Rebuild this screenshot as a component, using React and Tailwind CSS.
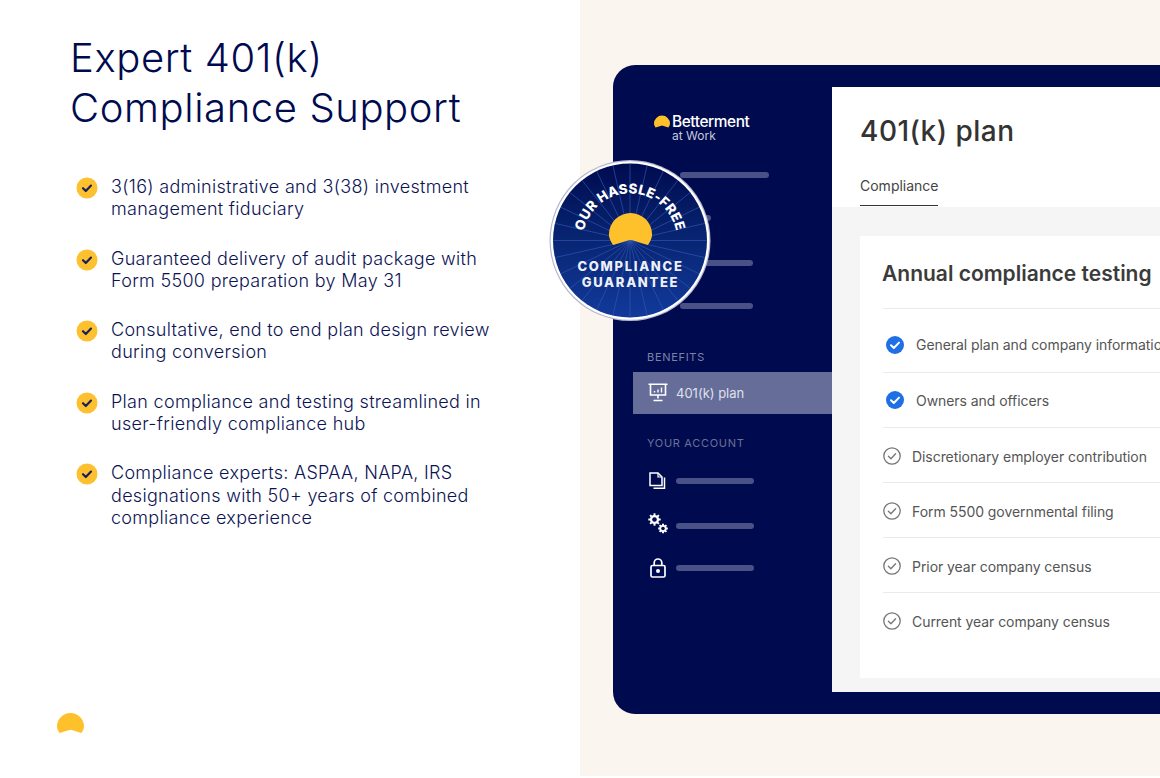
import React from 'react';

const bullets = [
  ['3(16) administrative and 3(38) investment', 'management fiduciary'],
  ['Guaranteed delivery of audit package with', 'Form 5500 preparation by May 31'],
  ['Consultative, end to end plan design review', 'during conversion'],
  ['Plan compliance and testing streamlined in', 'user-friendly compliance hub'],
  ['Compliance experts: ASPAA, NAPA, IRS', 'designations with 50+ years of combined', 'compliance experience'],
];

const checks = [
  { label: 'General plan and company information', done: true },
  { label: 'Owners and officers', done: true },
  { label: 'Discretionary employer contribution' },
  { label: 'Form 5500 governmental filing' },
  { label: 'Prior year company census' },
  { label: 'Current year company census' },
];

const SUN = 'M2.6 20 C1 17.5 0 15.6 0 13.4 A13.5 13.4 0 0 1 27 13.4 C27 15.6 26 17.5 24.4 20 L14.6 17 Q13.5 16.6 12.4 17 Z';

const Sun = ({ className }) => (
  <svg viewBox="0 0 27 20" className={className}>
    <path d={SUN} fill="#fec02b" />
  </svg>
);

const BulletIcon = () => (
  <svg viewBox="0 0 22 22" className="w-[22px] h-[22px] shrink-0">
    <circle cx="11" cy="11" r="10.5" fill="#fdc02f" />
    <path d="M7 11.2l2.8 2.8 5.2-5.4" fill="none" stroke="#1b2158" strokeWidth="2.2" strokeLinecap="round" strokeLinejoin="round" />
  </svg>
);

const BlueCheck = () => (
  <svg viewBox="0 0 18 18" className="w-[18px] h-[18px] shrink-0">
    <circle cx="9" cy="9" r="9" fill="#1f6fe5" />
    <path d="M5 9.3l2.8 2.7 5.2-5.4" fill="none" stroke="#fff" strokeWidth="2" strokeLinecap="round" strokeLinejoin="round" />
  </svg>
);

const GrayCheck = () => (
  <svg viewBox="0 0 18 18" className="w-[18px] h-[18px] shrink-0">
    <circle cx="9" cy="9" r="8.2" fill="none" stroke="#757575" strokeWidth="1.3" />
    <path d="M5.4 9.3l2.5 2.4 4.7-4.9" fill="none" stroke="#757575" strokeWidth="1.3" strokeLinecap="round" strokeLinejoin="round" />
  </svg>
);

const PlanIcon = () => (
  <svg viewBox="0 0 20 20" className="w-5 h-5 shrink-0" fill="none" stroke="#fff" strokeWidth="1.6">
    <path d="M0.5 1.2h19M2.5 1.2v10.8h15V1.2M10 12v3.5M5.5 17.5h9" />
    <path d="M6.5 9.5V8M10 9.5V6.5M13.5 9.5V4.5" strokeWidth="1.4" />
  </svg>
);

const CopyIcon = () => (
  <svg viewBox="0 0 18 18" className="w-[18px] h-[18px] shrink-0" fill="none" stroke="#fff" strokeWidth="1.5">
    <path d="M1 1h8l4 4v8.5H1z" />
    <path d="M9 1v4h4" strokeWidth="1.2" />
    <path d="M15.5 5.5v10.8H4.5" />
  </svg>
);

const gear = (x, y, r, outer) => {
  const teeth = [0, 45, 90, 135].map((a) => {
    const rad = (a * Math.PI) / 180;
    const dx = Math.cos(rad) * outer;
    const dy = Math.sin(rad) * outer;
    return <line key={a} x1={x - dx} y1={y - dy} x2={x + dx} y2={y + dy} strokeWidth="2" />;
  });
  return (
    <g>
      {teeth}
      <circle cx={x} cy={y} r={r} fill="#fff" stroke="none" />
      <circle cx={x} cy={y} r={r * 0.5} fill="#000a4e" stroke="none" />
    </g>
  );
};

const GearsIcon = () => (
  <svg viewBox="0 0 20 21" className="w-5 h-[21px] shrink-0 -translate-y-[3px]" fill="none" stroke="#fff">
    {gear(6.5, 6.5, 4.6, 6.2)}
    {gear(15, 15.5, 3.6, 4.8)}
  </svg>
);

const LockIcon = () => (
  <svg viewBox="0 0 16 20" className="w-4 h-5 shrink-0" fill="none" stroke="#fff" strokeWidth="1.7">
    <rect x="1" y="7.5" width="14" height="11.5" rx="1.5" />
    <path d="M4.2 7.5V4.8a3.8 3.8 0 0 1 7.6 0v2.7" />
    <circle cx="8" cy="13" r="2" fill="#fff" stroke="none" />
  </svg>
);

const Bar = ({ className }) => <div className={`h-[6px] rounded-full bg-[#4a5186] ${className}`} />;

const Badge = () => {
  // rays fan out from the notch of the sun
  const rays = [];
  for (let i = 0; i < 28; i++) {
    const rad = ((i * 360) / 28) * (Math.PI / 180);
    rays.push(
      <line key={i} x1="80" y1="80" x2={80 + Math.cos(rad) * 90} y2={80 + Math.sin(rad) * 90} stroke="#2f56b4" strokeOpacity="0.75" strokeWidth="0.9" />
    );
  }
  return (
    <svg viewBox="0 0 164 164" className="w-[164px] h-[164px]">
      <defs>
        <linearGradient id="badgeFill" x1="0" y1="0" x2="0" y2="1">
          <stop offset="0" stopColor="#000b4f" />
          <stop offset="0.45" stopColor="#07236f" />
          <stop offset="1" stopColor="#123a9b" />
        </linearGradient>
        <clipPath id="badgeClip">
          <circle cx="80" cy="80" r="77" />
        </clipPath>
        <path id="badgeArc" d="M33.7 88 A47 47 0 1 1 126.3 88" />
      </defs>
      <g transform="translate(2 1.5)">
        <circle cx="80" cy="80" r="80.5" fill="#b5b8cf" />
        <circle cx="80" cy="80" r="79.3" fill="#fff" />
        <circle cx="80" cy="80" r="77" fill="url(#badgeFill)" />
        <g clipPath="url(#badgeClip)">{rays}</g>
        <g transform="translate(58.9 52.5) scale(1.6)">
          <path d={SUN} fill="#fec02b" />
        </g>
        <text fontFamily="Inter, sans-serif" fontSize="13.5" fontWeight="800" letterSpacing="0.2" fill="#fff">
          <textPath href="#badgeArc" startOffset="50%" textAnchor="middle">OUR HASSLE-FREE</textPath>
        </text>
        <text x="80.5" y="110.5" textAnchor="middle" fontFamily="Inter, sans-serif" fontSize="13" fontWeight="800" letterSpacing="1.7" fill="#eef0f8">COMPLIANCE</text>
        <text x="80.5" y="126.5" textAnchor="middle" fontFamily="Inter, sans-serif" fontSize="13" fontWeight="800" letterSpacing="1.7" fill="#eef0f8">GUARANTEE</text>
      </g>
    </svg>
  );
};

const App = () => (
  <div className="relative flex w-[1160px] h-[778px] overflow-hidden bg-white font-['Inter',sans-serif]">
    {/* Left copy */}
    <div className="w-[580px] shrink-0 flex flex-col pl-[70px] pt-[33px] pb-[45px]">
      <h1 className="text-[40px] leading-[50px] font-light text-[#000a4e] tracking-[0.6px]">
        Expert 401(k)<br />Compliance Support
      </h1>
      <ul className="mt-[43px] ml-[6px] flex flex-col gap-[27px]">
        {bullets.map((lines) => (
          <li key={lines[0]} className="flex gap-[13px]">
            <div className="pt-[1px]"><BulletIcon /></div>
            <p className="text-[18px] leading-[22.3px] font-light tracking-[0.3px] text-[#0c1354]">
              {lines.map((l) => <span key={l} className="block whitespace-nowrap">{l}</span>)}
            </p>
          </li>
        ))}
      </ul>
      <Sun className="mt-auto -ml-[13px] w-[27px] h-5" />
    </div>

    {/* Right product mock */}
    <div className="flex-1 h-[776px] bg-[#faf5ef] pl-[33px] pt-[65px]">
      <div className="flex h-[649px] rounded-l-[22px] bg-[#000a4e] py-[22px]">
        <aside className="w-[219px] shrink-0 flex flex-col pt-[28px]">
          <div className="ml-[41px] flex items-start gap-[2px] h-[28px]">
            <Sun className="w-4 h-[13px]" />
            <div className="text-white">
              <div className="text-[15.4px] leading-[14px] font-medium tracking-[-0.4px]">Betterment</div>
              <div className="text-[12px] leading-[13px] text-[#c5c8da]">at Work</div>
            </div>
          </div>
          <Bar className="ml-[67px] w-[89px] mt-[29px]" />
          <Bar className="ml-[67px] w-[31px] mt-[37px]" />
          <Bar className="ml-[67px] w-[73px] mt-[39px]" />
          <Bar className="ml-[67px] w-[73px] mt-[37px]" />
          <div className="ml-[34px] mt-[41px] text-[11px] leading-[14px] tracking-[0.7px] text-[#7d82a8]">BENEFITS</div>
          <div className="ml-[20px] mt-[8px] h-[42px] flex items-center gap-[8px] pl-[15px] bg-[#676d99]">
            <PlanIcon />
            <span className="text-[13px] mt-[2px] text-[#dfe1ec]">401(k) plan</span>
          </div>
          <div className="ml-[34px] mt-[22px] text-[11px] leading-[14px] tracking-[0.7px] text-[#6a7099]">YOUR ACCOUNT</div>
          <div className="ml-[36px] mt-[21px] flex items-center gap-[9px] h-[20px]">
            <CopyIcon />
            <Bar className="w-[78px]" />
          </div>
          <div className="ml-[35px] mt-[25px] flex items-center gap-[8px] h-[20px]">
            <GearsIcon />
            <Bar className="w-[78px]" />
          </div>
          <div className="ml-[37px] mt-[22px] flex items-center gap-[10px] h-[20px]">
            <LockIcon />
            <Bar className="w-[78px]" />
          </div>
        </aside>

        <main className="flex-1 min-w-0 flex flex-col bg-white">
          <div className="h-[120px] shrink-0 pl-[28px] pt-[25px]">
            <h2 className="text-[28px] leading-[38px] font-medium tracking-[0.5px] text-[#333]">401(k) plan</h2>
            <div className="mt-[24px] w-[78px] h-[32px] border-b border-[#333] text-[14px] leading-[24px] text-[#444] whitespace-nowrap">Compliance</div>
          </div>
          <div className="flex-1 min-h-0 bg-[#f5f5f5] pl-[28px] pt-[29px] pb-[14px]">
            <div className="h-full bg-white pl-[23px] pt-[23px] overflow-hidden">
              <h3 className="-ml-[1px] text-[21px] leading-[30px] font-semibold text-[#3b3b3b] whitespace-nowrap">Annual compliance testing</h3>
              <ul className="mt-[19px]">
                {checks.map((c, i) => (
                  <li key={c.label} className={`border-t border-[#eaeaea] flex items-center whitespace-nowrap text-[14px] tracking-[-0.06px] text-[#555] ${i === 0 ? 'h-[64px] pt-[8px]' : i === 1 ? 'h-[55px]' : 'h-[55px] pt-[2px]'} ${c.done ? 'pl-[3px] gap-[12px]' : 'gap-[11px]'}`}>
                    {c.done ? <BlueCheck /> : <GrayCheck />}
                    {c.label}
                  </li>
                ))}
              </ul>
            </div>
          </div>
        </main>
      </div>
    </div>

    {/* Badge lies over the seam between copy and mock */}
    <div className="absolute left-[548px] top-[159px]">
      <Badge />
    </div>
  </div>
);

export default App;
